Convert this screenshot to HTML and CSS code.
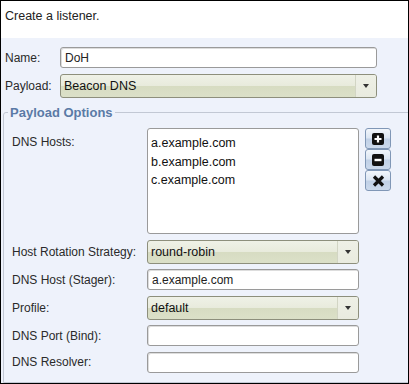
FILE: index.html
```html
<!DOCTYPE html>
<html>

<head>
	<meta charset="UTF-8">
	<title>Create a listener</title>
	<link rel="stylesheet" href="styles.css">
</head>

<body>
	<section class="dialog">
		<div class="intro">Create a listener.</div>
		<div class="panel">
			<div class="top">
				<label class="lbl">Name:</label>
				<div class="field">DoH</div>
				<label class="lbl">Payload:</label>
				<div class="combo">
					<span>Beacon DNS</span>
					<i class="arrow"></i>
				</div>
			</div>
			<fieldset class="options">
				<legend>Payload Options</legend>
				<div class="grid">
					<label class="lbl hosts-lbl">DNS Hosts:</label>
					<ul class="list">
						<li>a.example.com</li>
						<li>b.example.com</li>
						<li>c.example.com</li>
					</ul>
					<div class="tools">
						<button class="tool">
							<svg width="12" height="12" viewBox="0 0 12 12"><rect x="0" y="0" width="12" height="12" rx="2" fill="#111"/><path d="M6 2.5v7M2.5 6h7" stroke="#fff" stroke-width="2.2"/></svg>
						</button>
						<button class="tool">
							<svg width="12" height="12" viewBox="0 0 12 12"><rect x="0" y="0" width="12" height="12" rx="2" fill="#111"/><path d="M2.5 6h7" stroke="#fff" stroke-width="2.4"/></svg>
						</button>
						<button class="tool">
							<svg width="13" height="12" viewBox="0 0 13 12"><path d="M2 1.5l9 9M11 1.5l-9 9" stroke="#111" stroke-width="3.2"/></svg>
						</button>
					</div>

					<label class="lbl">Host Rotation Strategy:</label>
					<div class="combo">
						<span>round-robin</span>
						<i class="arrow"></i>
					</div>
					<span></span>

					<label class="lbl">DNS Host (Stager):</label>
					<div class="field">a.example.com</div>
					<span></span>

					<label class="lbl">Profile:</label>
					<div class="combo">
						<span>default</span>
						<i class="arrow"></i>
					</div>
					<span></span>

					<label class="lbl">DNS Port (Bind):</label>
					<div class="field"></div>
					<span></span>

					<label class="lbl">DNS Resolver:</label>
					<div class="field"></div>
					<span></span>
				</div>
			</fieldset>
		</div>
	</section>
</body>

</html>
```

FILE: styles.css
```css
		body {
			margin: 0;
			font-family: "Liberation Sans", Arial, sans-serif;
			font-size: 12px;
			color: #222;
		}

		ul {
			margin: 0;
			padding: 0;
			list-style: none;
		}

		.dialog {
			width: 409px;
			height: 384px;
			box-sizing: border-box;
			border: 1px solid #000;
			display: flex;
			flex-direction: column;
			overflow: hidden;
		}

		.intro {
			height: 37px;
			background-color: #fff;
			padding: 8px 0 0 4px;
			box-sizing: border-box;
			font-size: 12.5px;
		}

		.panel {
			flex: 1;
			background-color: #eef2fb;
			display: flex;
			flex-direction: column;
		}

		.top {
			display: grid;
			grid-template-columns: 55px 317px;
			row-gap: 6px;
			padding: 9px 0 0 4px;
			align-items: center;
		}

		.lbl {
			color: #2a2a2a;
		}

		.field {
			height: 21px;
			box-sizing: border-box;
			border: 1px solid #9a9a9a;
			border-radius: 3px;
			background-color: #fff;
			padding: 3px 0 0 4px;
			font-size: 12px;
			box-shadow: inset 1px 1px 0 #ddd;
		}

		.combo {
			height: 24px;
			box-sizing: border-box;
			border: 1px solid #8d8f7c;
			border-radius: 3px;
			background: linear-gradient(#eff1e7, #e8ebdc 50%, #d7dcc2 52%, #dbe0c8);
			display: flex;
			align-items: center;
			padding-left: 3px;
			font-size: 12.5px;
			color: #111;
		}

		.combo span {
			flex: 1;
		}

		.arrow {
			width: 20px;
			height: 100%;
			border-left: 1px solid #d2d5c4;
			position: relative;
			background: linear-gradient(#eef0e6, #e9ebdf);
			border-radius: 0 2px 2px 0;
		}

		.arrow::after {
			content: "";
			position: absolute;
			left: 7px;
			top: 9px;
			border-left: 3.5px solid transparent;
			border-right: 3.5px solid transparent;
			border-top: 4px solid #333;
		}

		.options {
			flex: 1;
			margin: 7px -4px 0 2px;
			padding: 0 0 0 8px;
			border: 1px solid #c2c8d4;
			border-radius: 3px 0 0 0;
		}

		.options legend {
			padding: 0 2px;
			margin-left: -4px;
			color: #5a7aa6;
			font-weight: bold;
			font-size: 13px;
		}

		.grid {
			display: grid;
			grid-template-columns: 129px 212px 26px;
			column-gap: 6px;
			row-gap: 5.5px;
			padding-top: 8px;
			align-items: center;
		}

		.hosts-lbl {
			align-self: start;
			padding-top: 7px;
		}

		.list {
			height: 106px;
			box-sizing: border-box;
			border: 1px solid #9a9a9a;
			border-radius: 3px;
			background-color: #fff;
			padding: 5px 0 0 3px;
			font-size: 12.5px;
			line-height: 18.5px;
			color: #111;
		}

		.tools {
			align-self: start;
			display: flex;
			flex-direction: column;
		}

		.tool {
			width: 26px;
			height: 21px;
			margin: 0;
			padding: 0;
			border: 1px solid #8097b6;
			border-radius: 3px;
			background: linear-gradient(#f2f6fb, #dbe5f2 48%, #c0d0e6 52%, #cbd9ec);
			display: flex;
			align-items: center;
			justify-content: center;
		}
```
